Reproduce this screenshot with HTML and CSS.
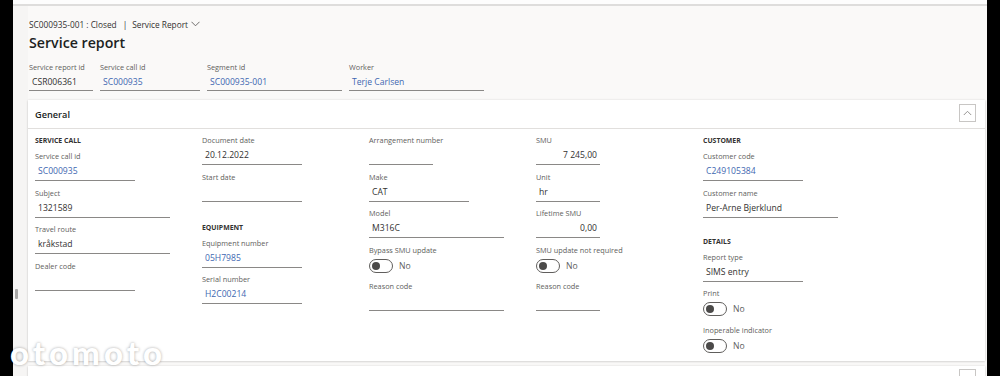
FILE: index.html
```html
<!DOCTYPE html>
<html lang="en">
<head>
<meta charset="utf-8">
<title>Service report</title>
<link rel="stylesheet" href="styles.css">
</head>
<body>
<div class="screen">
  <div class="edge"></div>
  <div class="app">
    <div class="topbar"></div>
    <div class="workspace">
      <div class="rail"><span class="grip"></span></div>
      <div class="content">
        <div class="crumb">
          <span>SC000935-001 : Closed</span>
          <span class="sep">|</span>
          <span>Service Report</span>
          <svg class="chev" width="9" height="6" viewBox="0 0 9 6"><path d="M0.5 0.8 L4.5 4.8 L8.5 0.8" fill="none" stroke="#605e5c" stroke-width="0.9"/></svg>
        </div>
        <h1 class="title">Service report</h1>
        <div class="head-fields">
          <div class="hfield w64"><div class="label">Service report id</div><div class="input">CSR006361</div></div>
          <div class="hfield w100"><div class="label">Service call id</div><div class="input link">SC000935</div></div>
          <div class="hfield w135"><div class="label">Segment id</div><div class="input link">SC000935-001</div></div>
          <div class="hfield w135"><div class="label">Worker</div><div class="input link">Terje Carlsen</div></div>
        </div>

        <section class="card">
          <div class="card-head">
            <span class="card-title">General</span>
            <button class="collapse" type="button" aria-label="Collapse">
              <svg width="9" height="6" viewBox="0 0 9 6"><path d="M0.8 5 L4.5 1.3 L8.2 5" fill="none" stroke="#8a8886" stroke-width="0.9"/></svg>
            </button>
          </div>
          <div class="card-body">
            <div class="col">
              <div class="group">SERVICE CALL</div>
              <div class="field"><div class="label">Service call id</div><div class="input w100 link">SC000935</div></div>
              <div class="field"><div class="label">Subject</div><div class="input w135">1321589</div></div>
              <div class="field"><div class="label">Travel route</div><div class="input w135">kråkstad</div></div>
              <div class="field"><div class="label">Dealer code</div><div class="input w100"></div></div>
            </div>
            <div class="col">
              <div class="field"><div class="label">Document date</div><div class="input w100">20.12.2022</div></div>
              <div class="field"><div class="label">Start date</div><div class="input w100"></div></div>
              <div class="group spaced">EQUIPMENT</div>
              <div class="field"><div class="label">Equipment number</div><div class="input w100 link">05H7985</div></div>
              <div class="field"><div class="label">Serial number</div><div class="input w100 link">H2C00214</div></div>
            </div>
            <div class="col">
              <div class="field"><div class="label">Arrangement number</div><div class="input w64"></div></div>
              <div class="field"><div class="label">Make</div><div class="input w100">CAT</div></div>
              <div class="field"><div class="label">Model</div><div class="input w135">M316C</div></div>
              <div class="field"><div class="label">Bypass SMU update</div><div class="toggle-row"><span class="toggle"></span><span class="toggle-text">No</span></div></div>
              <div class="field"><div class="label">Reason code</div><div class="input w135"></div></div>
            </div>
            <div class="col">
              <div class="field"><div class="label">SMU</div><div class="input w64 num">7 245,00</div></div>
              <div class="field"><div class="label">Unit</div><div class="input w64">hr</div></div>
              <div class="field"><div class="label">Lifetime SMU</div><div class="input w64 num">0,00</div></div>
              <div class="field"><div class="label">SMU update not required</div><div class="toggle-row"><span class="toggle"></span><span class="toggle-text">No</span></div></div>
              <div class="field"><div class="label">Reason code</div><div class="input w64"></div></div>
            </div>
            <div class="col">
              <div class="group">CUSTOMER</div>
              <div class="field"><div class="label">Customer code</div><div class="input w100 link">C249105384</div></div>
              <div class="field"><div class="label">Customer name</div><div class="input w135">Per-Arne Bjerklund</div></div>
              <div class="group spaced-sm">DETAILS</div>
              <div class="field"><div class="label">Report type</div><div class="input w100">SIMS entry</div></div>
              <div class="field"><div class="label">Print</div><div class="toggle-row"><span class="toggle"></span><span class="toggle-text">No</span></div></div>
              <div class="field last"><div class="label">Inoperable indicator</div><div class="toggle-row"><span class="toggle"></span><span class="toggle-text">No</span></div></div>
            </div>
          </div>
        </section>

        <section class="card next">
          <div class="card-head">
            <span class="card-title"></span>
            <button class="collapse" type="button" aria-label="Expand"></button>
          </div>
        </section>
      </div>
    </div>
  </div>
  <div class="edge"></div>
  <div class="watermark">otomoto</div>
</div>
</body>
</html>
```

FILE: styles.css
```css
* { box-sizing: border-box; }
html, body { margin: 0; padding: 0; }
body {
  background: #000;
  font-family: "Open Sans", "Noto Sans", sans-serif;
  color: #323130;
  overflow: hidden;
}
.screen {
  position: relative;
  display: flex;
  width: 1000px;
  height: 376px;
  overflow: hidden;
}
.edge { width: 13px; flex: none; background: #000; }
.app {
  flex: 1;
  display: flex;
  flex-direction: column;
  background: #faf9f8;
  min-width: 0;
}
.topbar {
  height: 6px;
  flex: none;
  background: #fdfdfd;
  border-bottom: 2px solid #dedddc;
}
.workspace { flex: 1; display: flex; min-height: 0; }
.rail {
  width: 15px;
  flex: none;
  background: #f6f5f4;
  display: flex;
  flex-direction: column;
  padding-left: 2px;
}
.grip {
  margin-top: 283px;
  width: 3px;
  height: 10px;
  background: #a9a8a7;
  border-radius: 1px;
}
.content {
  flex: 1;
  padding: 11px 2px 0 0;
  min-width: 0;
}
.crumb {
  margin-left: 1px;
  height: 14px;
  display: flex;
  align-items: center;
  font-size: 8.3px;
  color: #323130;
  white-space: nowrap;
}
.crumb .sep { margin: 0 5px 0 6px; }
.crumb .chev { margin-left: 3px; }
.title {
  margin: 2px 0 0 1px;
  font-size: 14.2px;
  line-height: 20px;
  font-weight: 600;
  color: #201f1e;
}
.head-fields {
  margin: 7px 0 0 1px;
  display: flex;
  gap: 7px;
}
.label {
  font-size: 7.3px;
  line-height: 14px;
  height: 14px;
  color: #605e5c;
  white-space: nowrap;
}
.input {
  height: 18px;
  line-height: 17px;
  font-size: 8.6px;
  padding: 0 3px;
  border-bottom: 1px solid #8a8886;
  color: #323130;
  white-space: nowrap;
}
.hfield .input { height: 17px; line-height: 17px; }
.link { color: #3e67b1; }
.num { text-align: right; }
.w64 { width: 64px; }
.w100 { width: 100px; }
.w135 { width: 135px; }

.card {
  margin-top: 9px;
  background: #fff;
  box-shadow: 0 0 2px rgba(0,0,0,0.12), 0 1px 2px rgba(0,0,0,0.10);
}
.card-head {
  height: 29px;
  border-bottom: 1px solid #e1dfdd;
  display: flex;
  align-items: flex-start;
  justify-content: space-between;
  padding: 0 9px 0 7px;
}
.card-title {
  font-size: 9.2px;
  font-weight: 600;
  line-height: 29px;
  color: #201f1e;
}
.collapse {
  margin-top: 4px;
  width: 17px;
  height: 18px;
  padding: 0;
  border: 1px solid #c8c6c4;
  background: #fff;
  display: flex;
  align-items: center;
  justify-content: center;
}
.card-body {
  display: flex;
  padding: 4px 7px 2px;
}
.col { width: 167px; flex: none; }
.group {
  font-size: 6.9px;
  font-weight: 700;
  line-height: 16px;
  height: 16px;
  color: #323130;
}
.group.spaced { margin-top: 18px; }
.group.spaced-sm { margin-top: 16px; }
.field { margin-bottom: 4.5px; }
.toggle-row {
  height: 18px;
  display: flex;
  align-items: center;
}
.toggle {
  width: 24px;
  height: 14px;
  border: 1px solid #605e5c;
  border-radius: 7px;
  display: flex;
  align-items: center;
  padding-left: 2px;
}
.toggle::before {
  content: "";
  width: 8px;
  height: 8px;
  border-radius: 50%;
  background: #4b4a49;
}
.toggle-text {
  margin-left: 6px;
  font-size: 8.6px;
  color: #605e5c;
}
.card.next { margin-top: 5px; }
.card.next .card-head { border-bottom: none; }
.card.next .collapse { margin-top: 3px; }

.watermark {
  position: absolute;
  left: 10px;
  top: 336px;
  font-family: "Lato", sans-serif;
  font-weight: 900;
  font-size: 33px;
  letter-spacing: 4px;
  color: #fff;
  text-shadow: 0 0 3px rgba(0,0,0,0.35);
  line-height: 33px;
}
```
